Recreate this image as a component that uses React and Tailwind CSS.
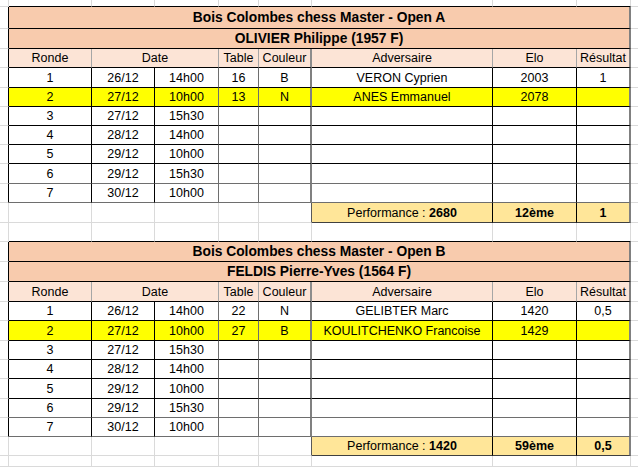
const COLS = 'grid grid-cols-[9px_83px_63px_64px_40px_53px_181px_84px_54px_1fr]';
const H = { 7: 'h-[7px]', 11: 'h-[11px]', 19: 'h-[19px]', 20: 'h-[20px]', 22: 'h-[22px]' };

const tournois = [
  {
    titre: 'Bois Colombes chess Master - Open A',
    joueur: 'OLIVIER Philippe (1957 F)',
    hTitre: 22, hNom: 20, hEntete: 19,
    hRondes: [20, 19, 19, 19, 19, 20, 19],
    hPerf: 20,
    rondes: [
      ['1', '26/12', '14h00', '16', 'B', 'VERON Cyprien', '2003', '1'],
      ['2', '27/12', '10h00', '13', 'N', 'ANES Emmanuel', '2078', ''],
      ['3', '27/12', '15h30'],
      ['4', '28/12', '14h00'],
      ['5', '29/12', '10h00'],
      ['6', '29/12', '15h30'],
      ['7', '30/12', '10h00'],
    ],
    perf: '2680', classement: '12ème', points: '1',
  },
  {
    titre: 'Bois Colombes chess Master - Open B',
    joueur: 'FELDIS Pierre-Yves (1564 F)',
    hTitre: 20, hNom: 20, hEntete: 20,
    hRondes: [19, 20, 19, 19, 20, 19, 19],
    hPerf: 19,
    rondes: [
      ['1', '26/12', '14h00', '22', 'N', 'GELIBTER Marc', '1420', '0,5'],
      ['2', '27/12', '10h00', '27', 'B', 'KOULITCHENKO Francoise', '1429', ''],
      ['3', '27/12', '15h30'],
      ['4', '28/12', '14h00'],
      ['5', '29/12', '10h00'],
      ['6', '29/12', '15h30'],
      ['7', '30/12', '10h00'],
    ],
    perf: '1420', classement: '59ème', points: '0,5',
  },
];

const C = ({ className = '', children }) => (
  <div className={`flex items-center justify-center pt-[1px] border-r border-b border-[#dadada] whitespace-nowrap overflow-hidden ${className}`}>
    {children}
  </div>
);

const LigneVide = ({ h, hautTableau }) => (
  <div className={`${COLS} ${H[h]}`}>
    <C />
    {[1, 2, 3, 4, 5, 6, 7, 8].map((i) => (
      <C key={i} className={hautTableau ? 'border-b-black' : ''} />
    ))}
    <C className="border-r-0" />
  </div>
);

const Titre = ({ h, texte }) => (
  <div className={`${COLS} ${H[h]}`}>
    <C className="border-r-black" />
    <C className="col-span-8 bg-[#f8cbad] border-b-black border-r-2 border-r-[#808080] font-bold text-[13.8px]">{texte}</C>
    <C className="border-r-0" />
  </div>
);

const Entete = ({ h }) => (
  <div className={`${COLS} ${H[h]}`}>
    <C className="border-r-black" />
    <C className="bg-[#fce4d6] border-b-black border-r-[#a6a6a6]">Ronde</C>
    <C className="col-span-2 bg-[#fce4d6] border-b-black border-r-[#a6a6a6]">Date</C>
    <C className="bg-[#fce4d6] border-b-black border-r-[#a6a6a6]">Table</C>
    <C className="bg-[#fce4d6] border-b-black border-r-2 border-r-[#8c8c8c]">Couleur</C>
    <C className="bg-[#fce4d6] border-b-black border-r-[#a6a6a6]">Adversaire</C>
    <C className="bg-[#fce4d6] border-b-black border-r-[#a6a6a6]">Elo</C>
    <C className="bg-[#fce4d6] border-b-black border-r-2 border-r-[#808080]">Résultat</C>
    <C className="border-r-0" />
  </div>
);

const Ronde = ({ h, r, jaune, bas }) => {
  const bg = jaune ? 'bg-[#ffff00]' : 'bg-white';
  const b = bas ? 'border-b-[#6e6e6e]' : 'border-b-black';
  return (
    <div className={`${COLS} ${H[h]}`}>
      <C className="border-r-black" />
      <C className={`${bg} ${b} border-r-black`}>{r[0]}</C>
      <C className={`${bg} ${b} border-r-black`}>{r[1]}</C>
      <C className={`${bg} ${b} border-r-[#6e6e6e]`}>{r[2]}</C>
      <C className={`${bg} ${b} border-r-[#6e6e6e]`}>{r[3]}</C>
      <C className={`${bg} ${b} border-r-2 border-r-[#808080]`}>{r[4]}</C>
      <C className={`${bg} ${b} border-r-black`}>{r[5]}</C>
      <C className={`${bg} ${b} border-r-black`}>{r[6]}</C>
      <C className={`${bg} ${b} border-r-2 border-r-[#808080]`}>{r[7]}</C>
      <C className="border-r-0" />
    </div>
  );
};

const Perf = ({ h, t }) => (
  <div className={`${COLS} ${H[h]}`}>
    <C />
    <C />
    <C />
    <C />
    <C />
    <C className="border-r-[#595959]" />
    <C className="bg-[#ffe699] border-b-[#404040] border-r-black">
      Performance :&nbsp;<span className="font-bold">{t.perf}</span>
    </C>
    <C className="bg-[#ffe699] border-b-[#404040] border-r-black font-bold">{t.classement}</C>
    <C className="bg-[#ffe699] border-b-[#404040] border-r-2 border-r-[#808080] font-bold">{t.points}</C>
    <C className="border-r-0" />
  </div>
);

const Tableau = ({ t }) => (
  <>
    <Titre h={t.hTitre} texte={t.titre} />
    <Titre h={t.hNom} texte={t.joueur} />
    <Entete h={t.hEntete} />
    {t.rondes.map((r, i) => (
      <Ronde key={i} h={t.hRondes[i]} r={r} jaune={i === 1} bas={i >= 5} />
    ))}
    <Perf h={t.hPerf} t={t} />
  </>
);

export default function App() {
  return (
    <div className="w-[638px] h-[467px] overflow-hidden bg-white text-black text-[12.5px] font-['Liberation_Sans',Arial,sans-serif] leading-none">
      <LigneVide h={7} hautTableau />
      <Tableau t={tournois[0]} />
      <LigneVide h={19} hautTableau />
      <Tableau t={tournois[1]} />
      <LigneVide h={11} />
    </div>
  );
}
